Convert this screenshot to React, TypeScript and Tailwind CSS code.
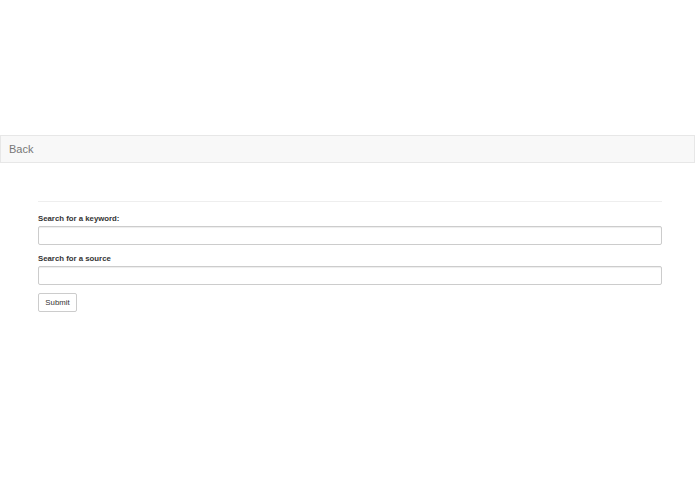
export default function App() {
  return (
    <div className="min-h-[494px] bg-white pt-[135px] font-['Liberation_Sans',Arial,sans-serif] text-[#333]">
      <nav className="flex h-[28px] items-center border border-[#e7e7e7] bg-[#f8f8f8] pl-[8px]">
        <a className="text-[11px] leading-none text-[#777]">Back</a>
      </nav>

      <div className="ml-[38px] mt-[38px] w-[624px]">
        <hr className="border-t border-[#eee]" />
        <form>
          <label className="mt-[12px] mb-[2px] block text-[7.8px] font-bold leading-[10px]">
            Search for a keyword:
          </label>
          <input
            type="text"
            className="block h-[19px] w-full rounded-[2px] border border-[#ccc] bg-white shadow-[inset_0_1px_1px_rgba(0,0,0,0.075)]"
          />
          <label className="mt-[9px] mb-[2px] block text-[7.8px] font-bold leading-[10px]">
            Search for a source
          </label>
          <input
            type="text"
            className="block h-[19px] w-full rounded-[2px] border border-[#ccc] bg-white shadow-[inset_0_1px_1px_rgba(0,0,0,0.075)]"
          />
          <button
            type="button"
            className="mt-[8px] flex h-[19px] w-[39px] items-center justify-center rounded-[2px] border border-[#ccc] bg-white text-[7.8px] leading-none text-[#333]"
          >
            Submit
          </button>
        </form>
      </div>
    </div>
  );
}
